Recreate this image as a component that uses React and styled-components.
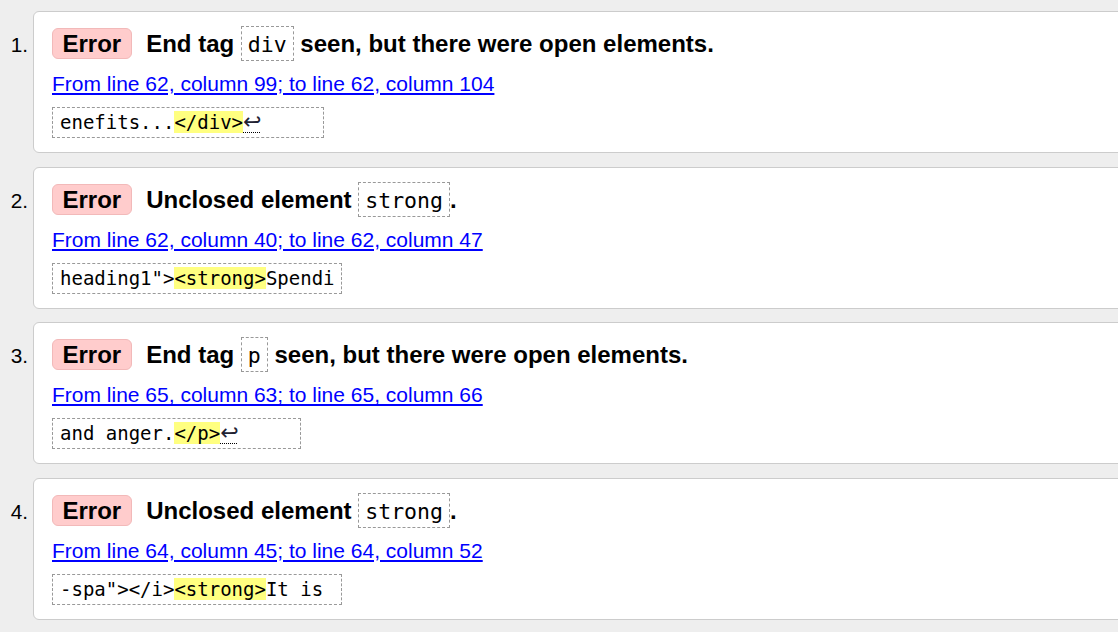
import React from 'react';
import styled, { createGlobalStyle } from 'styled-components';

const GlobalStyle = createGlobalStyle`
  html, body {
    margin: 0;
    padding: 0;
    background: #eeeeee;
    overflow: hidden;
  }
  body {
    font-family: "Liberation Sans", Arial, sans-serif;
    color: #000;
  }
`;

const MESSAGES = [
  {
    title: 'End tag ',
    code: 'div',
    rest: ' seen, but there were open elements.',
    location: 'From line 62, column 99; to line 62, column 104',
    before: 'enefits...',
    mark: '</div>',
    after: '',
    lf: true,
    trail: '     ',
  },
  {
    title: 'Unclosed element ',
    code: 'strong',
    rest: '.',
    location: 'From line 62, column 40; to line 62, column 47',
    before: 'heading1">',
    mark: '<strong>',
    after: 'Spendi',
    lf: false,
    trail: '',
  },
  {
    title: 'End tag ',
    code: 'p',
    rest: ' seen, but there were open elements.',
    location: 'From line 65, column 63; to line 65, column 66',
    before: 'and anger.',
    mark: '</p>',
    after: '',
    lf: true,
    trail: '     ',
  },
  {
    title: 'Unclosed element ',
    code: 'strong',
    rest: '.',
    location: 'From line 64, column 45; to line 64, column 52',
    before: '-spa"></i>',
    mark: '<strong>',
    after: 'It is',
    lf: false,
    trail: ' ',
  },
];

const List = styled.ol`
  list-style: none;
  margin: 0;
  padding: 11px 0 0 0;
  display: flex;
  flex-direction: column;
  gap: 13.67px;
`;

const Item = styled.li`
  display: flex;
  align-items: baseline;
`;

const Number = styled.span`
  flex: 0 0 28px;
  margin-right: 5px;
  text-align: right;
  font-size: 20.8px;
  line-height: 24px;
`;

const Card = styled.div`
  flex: 1;
  margin-right: -8px;
  background: #fff;
  border: 1px solid #cccccc;
  border-radius: 6px;
  padding: 14px 18px;
  display: flex;
  flex-direction: column;
  align-items: flex-start;
  gap: 11px;
`;

const Header = styled.p`
  margin: 0;
  display: flex;
  align-items: baseline;
  font-size: 24px;
  font-weight: bold;
`;

const Badge = styled.strong`
  background: #ffcccc;
  border: 1px solid #f2b9b9;
  border-radius: 6px;
  padding: 0 9.5px;
  line-height: 29px;
  margin-right: 14.5px;
`;

const Title = styled.span`
  white-space: pre;
`;

const InlineCode = styled.code`
  display: inline-block;
  font-family: "DejaVu Sans Mono", "Liberation Mono", monospace;
  font-size: 21.5px;
  font-weight: normal;
  line-height: 30px;
  padding: 3px 6px 0;
  border: 1px dashed #999999;
`;

const Location = styled.a`
  font-size: 21px;
  line-height: 24px;
  color: #0000ff;
  text-decoration: underline;
  cursor: pointer;
`;

const Extract = styled.code`
  display: inline-block;
  font-family: "DejaVu Sans Mono", "Liberation Mono", monospace;
  font-size: 19px;
  line-height: 23px;
  padding: 3px 6px 3px 7px;
  border: 1px dashed #999999;
  white-space: pre;
`;

const Mark = styled.b`
  font-weight: normal;
  background: #ffff80;
`;

const LineFeed = styled.abbr`
  display: inline-block;
  width: 17px;
  text-align: center;
  font-family: "DejaVu Sans", sans-serif;
  font-size: 22px;
  line-height: 21px;
  color: #223;
  text-decoration: none;
  border-bottom: 1px dotted #000;
`;

const Message = ({ index, msg }) => (
  <Item>
    <Number>{index + 1}.</Number>
    <Card>
      <Header>
        <Badge>Error</Badge>
        <Title>
          {msg.title}
          <InlineCode>{msg.code}</InlineCode>
          {msg.rest}
        </Title>
      </Header>
      <Location>{msg.location}</Location>
      <Extract>
        {msg.before}
        <Mark>{msg.mark}</Mark>
        {msg.after}
        {msg.lf && <LineFeed title="Line break">↩</LineFeed>}
        {msg.trail}
      </Extract>
    </Card>
  </Item>
);

export default function App() {
  return (
    <>
      <GlobalStyle />
      <List>
        {MESSAGES.map((msg, i) => (
          <Message key={i} index={i} msg={msg} />
        ))}
      </List>
    </>
  );
}
